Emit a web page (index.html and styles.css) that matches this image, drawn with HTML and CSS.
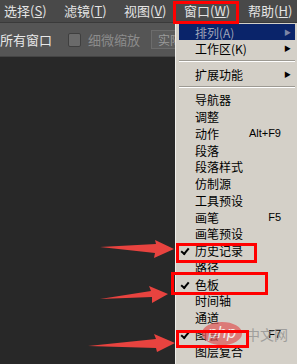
FILE: index.html
```html
<!DOCTYPE html>
<html>
<head>
  <meta charset="utf-8">
  <title>窗口菜单</title>
  <link rel="stylesheet" href="styles.css">
</head>
<body>
  <div class="menubar">
    <span class="top-item">选择(<u>S</u>)</span>
    <span class="top-item">滤镜(<u>T</u>)</span>
    <span class="top-item">视图(<u>V</u>)</span>
    <span class="top-item wide">窗口(<u>W</u>)</span>
    <span class="top-item">帮助(<u>H</u>)</span>
  </div>

  <div class="optbar">
    <span class="opt-text">放所有窗口</span>
    <span class="checkbox"></span>
    <span class="opt-text disabled">细微缩放</span>
    <span class="opt-btn">实际像素</span>
  </div>

  <div class="workspace"></div>

  <!-- dropdown of 窗口 -->
  <div class="menu">
    <div class="item active">排列(A)<span class="sub">&#9654;</span></div>
    <div class="item">工作区(K)<span class="sub">&#9654;</span></div>
    <div class="sep"></div>
    <div class="item">扩展功能<span class="sub">&#9654;</span></div>
    <div class="sep"></div>
    <div class="item">导航器</div>
    <div class="item">调整</div>
    <div class="item">动作<span class="key">Alt+F9</span></div>
    <div class="item">段落</div>
    <div class="item">段落样式</div>
    <div class="item">仿制源</div>
    <div class="item">工具预设</div>
    <div class="item">画笔<span class="key">F5</span></div>
    <div class="item">画笔预设</div>
    <div class="item checked">历史记录</div>
    <div class="item">路径</div>
    <div class="item checked">色板</div>
    <div class="item">时间轴</div>
    <div class="item">通道</div>
    <div class="item checked">图层<span class="key">F7</span></div>
    <div class="item">图层复合</div>
  </div>

  <!-- watermark -->
  <div class="watermark">
    <span class="wm-logo">php</span>
    <span class="wm-text">中文网</span>
  </div>

  <!-- red annotations -->
  <div class="mark mark-menu"></div>
  <div class="mark mark-history"></div>
  <div class="mark mark-swatch"></div>
  <div class="mark mark-layer"></div>

  <svg class="arrows" width="297" height="364" viewBox="0 0 297 364">
    <path d="M100 247 L156 244 L155 240 L174 249 L154 258 L155 253 Z" />
    <path d="M100 299 L151 291 L149 286 L168 294 L152 303 L152 297 Z" />
    <path d="M88 346 L156 339 L154 334 L175 343 L157 352 L156 348 Z" />
  </svg>
</body>
</html>
```

FILE: styles.css
```css
body {
  margin: 0;
  width: 297px;
  height: 364px;
  overflow: hidden;
  position: relative;
  background-color: #282828;
  font-family: "Noto Sans CJK SC", "DejaVu Sans", sans-serif;
}

/* top menu bar */
.menubar {
  height: 22px;
  display: flex;
  align-items: center;
  padding-left: 4px;
  background-color: #494949;
  border-bottom: 1px solid #3a3a3a;
}

.top-item {
  width: 60px;
  flex-shrink: 0;
  color: #e4e4e4;
  font-size: 13px;
  line-height: 22px;
}

.top-item.wide {
  width: 64px;
}

/* options bar */
.optbar {
  height: 33px;
  display: flex;
  align-items: center;
  margin-left: -13px;
  background-color: #555555;
  border-bottom: 1px solid #444444;
}

.opt-text {
  flex-shrink: 0;
  color: #e8e8e8;
  font-size: 13px;
}

.opt-text.disabled {
  color: #8c8c8c;
}

.checkbox {
  flex-shrink: 0;
  width: 11px;
  height: 12px;
  margin: 0 7px 0 16px;
  border: 1px solid #3f3f3f;
  border-radius: 2px;
  background-color: #6a6a6a;
}

.opt-btn {
  flex-shrink: 0;
  margin-left: 11px;
  padding: 0 6px;
  height: 17px;
  line-height: 17px;
  font-size: 12px;
  color: #9a9a9a;
  border: 1px solid #6c6c6c;
  background-color: #5c5c5c;
}

.workspace {
  height: 307px;
  background-color: #282828;
}

/* dropdown menu */
.menu {
  position: absolute;
  left: 175px;
  top: 23px;
  width: 122px;
  height: 341px;
  box-sizing: border-box;
  padding: 1px 2px 0 3px;
  background-color: #d4d0c8;
  border-left: 1px solid #efeeea;
}

.item {
  position: relative;
  display: flex;
  align-items: center;
  height: 16.75px;
  padding-left: 16px;
  padding-right: 14px;
  font-size: 12px;
  color: #000000;
}

.item.active {
  height: 16px;
  background-color: #0a246a;
  color: #9ea3b8;
}

.key {
  margin-left: auto;
  font-family: "Liberation Sans", sans-serif;
  font-size: 11px;
}

.sub {
  position: absolute;
  right: 4px;
  font-size: 7px;
  color: #000000;
}

.item.active .sub {
  color: #7e86a6;
}

.item.checked::before {
  content: "";
  position: absolute;
  left: 2px;
  top: 6px;
  width: 6px;
  height: 3px;
  border-left: 2px solid #000000;
  border-bottom: 2px solid #000000;
  transform: rotate(-50deg);
}

.sep {
  height: 9px;
  display: flex;
  align-items: center;
}

.sep::after {
  content: "";
  display: block;
  width: 100%;
  border-top: 1px solid #9d9a93;
  border-bottom: 1px solid #ffffff;
}

/* watermark over the menu */
.watermark {
  position: absolute;
  left: 202px;
  top: 322px;
  display: flex;
  align-items: center;
  opacity: 0.7;
}

.wm-logo {
  width: 40px;
  height: 23px;
  line-height: 22px;
  text-align: center;
  border-radius: 50%;
  background-color: #e05656;
  color: #ffffff;
  font-family: "DejaVu Sans", sans-serif;
  font-size: 15px;
  font-style: italic;
}

.wm-text {
  margin-left: 4px;
  color: #8a8a8a;
  font-size: 14px;
}

/* red annotation boxes */
.mark {
  position: absolute;
  border: 3px solid #ff0000;
  box-sizing: border-box;
}

.mark-menu {
  left: 173px;
  top: 1px;
  width: 66px;
  height: 23px;
}

.mark-history {
  left: 176px;
  top: 243px;
  width: 81px;
  height: 20px;
}

.mark-swatch {
  left: 171px;
  top: 272px;
  width: 97px;
  height: 23px;
}

.mark-layer {
  left: 176px;
  top: 330px;
  width: 73px;
  height: 18px;
}

.arrows {
  position: absolute;
  left: 0;
  top: 0;
  fill: #e8433f;
}
```
